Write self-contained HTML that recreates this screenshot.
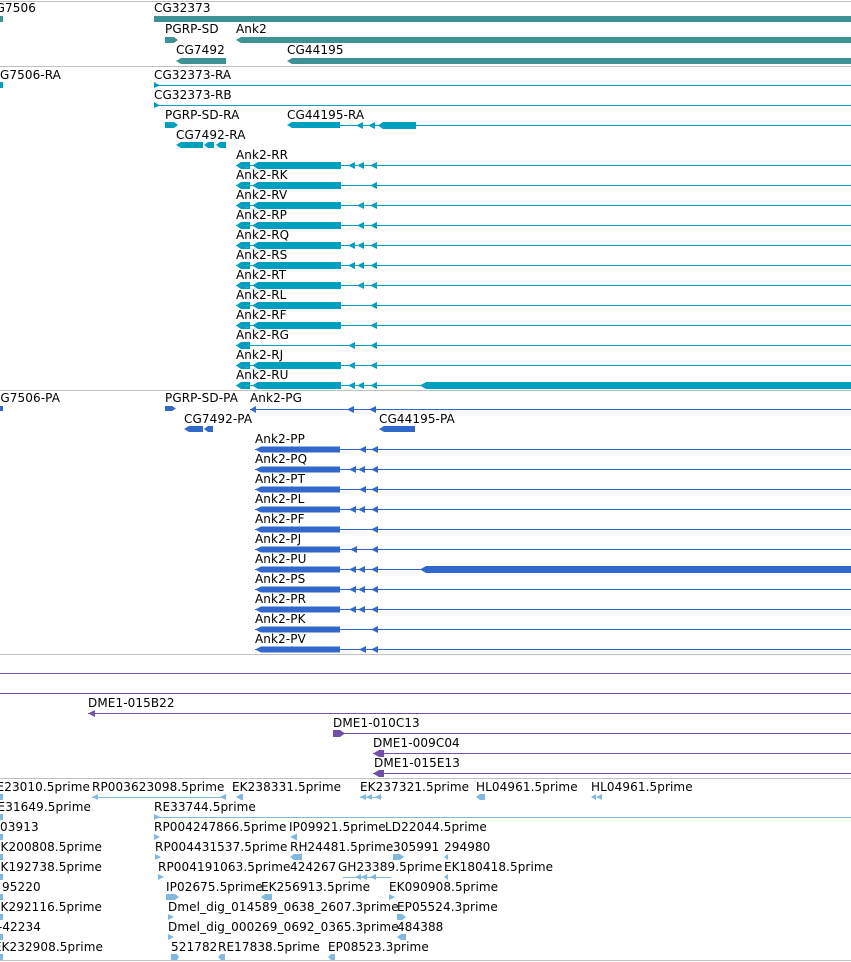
<!DOCTYPE html>
<html><head><meta charset="utf-8"><style>
html,body{margin:0;padding:0;background:#fff;width:851px;height:962px;overflow:hidden}
svg{display:block}
text{font-family:"DejaVu Sans","Liberation Sans",sans-serif;font-size:12px;fill:#000;letter-spacing:0.1px}
rect{shape-rendering:crispEdges}
</style></head><body>
<svg width="851" height="962" viewBox="0 0 851 962" xmlns="http://www.w3.org/2000/svg">
<!-- separators -->
<g fill="#c0c0c0">
<rect x="0" y="1" width="851" height="1"/>
<rect x="0" y="66" width="851" height="1"/>
<rect x="0" y="390" width="851" height="1"/>
<rect x="0" y="654" width="851" height="1"/>
<rect x="0" y="778" width="851" height="1"/>
<rect x="0" y="960" width="851" height="1"/>
</g>

<!-- GENE TRACK -->
<g fill="#3f9294">
<rect x="0" y="16" width="3" height="6"/>
<rect x="154" y="16" width="697" height="6"/>
<polygon points="165,37 174,37 178,40 174,43 165,43"/>
<polygon points="236,40 241,37 851,37 851,43 241,43"/>
<polygon points="176,61 181,58 226,58 226,64 181,64"/>
<polygon points="287,61 292,58 851,58 851,64 292,64"/>
</g>
<text x="36" y="12" text-anchor="end">CG7506</text>
<text x="154" y="12">CG32373</text>
<text x="165" y="33">PGRP-SD</text>
<text x="236" y="33">Ank2</text>
<text x="176" y="54">CG7492</text>
<text x="287" y="54">CG44195</text>

<!-- TRANSCRIPTS -->
<g fill="#009fc0" stroke="none">
<rect x="0" y="82" width="3" height="6"/>
<rect x="154" y="85" width="697" height="1"/>
<polygon points="154,82 160,85.5 154,88"/>
<rect x="154" y="105" width="697" height="1"/>
<polygon points="154,102 160,105.5 154,108"/>
<polygon points="165,122 174,122 178,125 174,128 165,128"/>
<polygon points="287,125 292,122 340,122 340,128 292,128"/>
<rect x="340" y="125" width="511" height="1"/>
<polygon points="356,125.5 363,122 363,129"/>
<polygon points="368,125.5 375,122 375,129"/>
<polygon points="378,125.5 383,122 416,122 416,129 383,129"/>
<polygon points="176,145 181,142 203,142 203,148 181,148"/>
<polygon points="204,145 208,142 214,142 214,148 208,148"/>
<polygon points="216,145 220,142 226,142 226,148 220,148"/>
</g>
<text x="61" y="79" text-anchor="end">CG7506-RA</text>
<text x="154" y="79">CG32373-RA</text>
<text x="154" y="99">CG32373-RB</text>
<text x="165" y="119">PGRP-SD-RA</text>
<text x="287" y="119">CG44195-RA</text>
<text x="176" y="139">CG7492-RA</text>

<defs>
<g id="sb"><polygon points="236,0.5 241,-3 250,-3 250,4 241,4" fill="#009fc0"/><rect x="236" y="0" width="615" height="1" fill="#009fc0"/></g>
<g id="bb"><polygon points="252,0.5 258,-3 341,-3 341,4 258,4" fill="#009fc0"/></g>
<polygon id="ar" points="0,0.5 7,-3 7,4" fill="#009fc0"/>
<g id="pb"><polygon points="255,0.5 261,-2.5 340,-2.5 340,3.5 261,3.5" fill="#3168cc"/><rect x="255" y="0" width="596" height="1" fill="#3168cc"/></g>
<polygon id="pa" points="0,0.5 7,-3 7,4" fill="#3168cc"/>
</defs>

<!-- Ank2 R rows -->
<g transform="translate(0,165)"><use href="#sb"/><use href="#bb"/><use href="#ar" x="348"/><use href="#ar" x="357"/><use href="#ar" x="370"/></g>
<g transform="translate(0,185)"><use href="#sb"/><use href="#bb"/><use href="#ar" x="370"/></g>
<g transform="translate(0,205)"><use href="#sb"/><use href="#bb"/><use href="#ar" x="357"/><use href="#ar" x="370"/></g>
<g transform="translate(0,225)"><use href="#sb"/><use href="#bb"/><use href="#ar" x="357"/><use href="#ar" x="370"/></g>
<g transform="translate(0,245)"><use href="#sb"/><use href="#bb"/><use href="#ar" x="348"/><use href="#ar" x="357"/><use href="#ar" x="370"/></g>
<g transform="translate(0,265)"><use href="#sb"/><use href="#bb"/><use href="#ar" x="348"/><use href="#ar" x="357"/><use href="#ar" x="370"/></g>
<g transform="translate(0,285)"><use href="#sb"/><use href="#bb"/><use href="#ar" x="357"/><use href="#ar" x="370"/></g>
<g transform="translate(0,305)"><use href="#sb"/><use href="#bb"/><use href="#ar" x="370"/></g>
<g transform="translate(0,325)"><use href="#sb"/><use href="#bb"/><use href="#ar" x="370"/></g>
<g transform="translate(0,345)"><use href="#sb"/><use href="#ar" x="348"/><use href="#ar" x="370"/></g>
<g transform="translate(0,365)"><use href="#sb"/><use href="#bb"/><use href="#ar" x="348"/><use href="#ar" x="370"/></g>
<g transform="translate(0,385)"><use href="#sb"/><use href="#bb"/><use href="#ar" x="348"/><use href="#ar" x="357"/><use href="#ar" x="370"/><polygon points="420,0.5 426,-3 851,-3 851,4 426,4" fill="#009fc0"/></g>
<text x="236" y="159">Ank2-RR</text>
<text x="236" y="179">Ank2-RK</text>
<text x="236" y="199">Ank2-RV</text>
<text x="236" y="219">Ank2-RP</text>
<text x="236" y="239">Ank2-RQ</text>
<text x="236" y="259">Ank2-RS</text>
<text x="236" y="279">Ank2-RT</text>
<text x="236" y="299">Ank2-RL</text>
<text x="236" y="319">Ank2-RF</text>
<text x="236" y="339">Ank2-RG</text>
<text x="236" y="359">Ank2-RJ</text>
<text x="236" y="379">Ank2-RU</text>

<!-- PROTEINS -->
<g fill="#3168cc">
<rect x="0" y="406" width="3" height="5"/>
<polygon points="165,406 172,406 176,408.5 172,411 165,411"/>
<rect x="250" y="409" width="601" height="1"/>
<polygon points="250,409.5 256,406 256,413"/>
<polygon points="184,429 189,426 203,426 203,432 189,432"/>
<polygon points="204,429 208,426 213,426 213,432 208,432"/>
<polygon points="379,429 384,426 415,426 415,432 384,432"/>
</g>
<use href="#pa" x="347" y="409"/><use href="#pa" x="369" y="409"/>
<text x="60" y="402" text-anchor="end">CG7506-PA</text>
<text x="165" y="402">PGRP-SD-PA</text>
<text x="250" y="402">Ank2-PG</text>
<text x="184" y="423">CG7492-PA</text>
<text x="379" y="423">CG44195-PA</text>

<g transform="translate(0,449)"><use href="#pb"/><use href="#pa" x="359"/><use href="#pa" x="371"/></g>
<g transform="translate(0,469)"><use href="#pb"/><use href="#pa" x="349"/><use href="#pa" x="358"/><use href="#pa" x="371"/></g>
<g transform="translate(0,489)"><use href="#pb"/><use href="#pa" x="359"/><use href="#pa" x="371"/></g>
<g transform="translate(0,509)"><use href="#pb"/><use href="#pa" x="349"/><use href="#pa" x="358"/><use href="#pa" x="371"/></g>
<g transform="translate(0,529)"><use href="#pb"/><use href="#pa" x="371"/></g>
<g transform="translate(0,549)"><use href="#pb"/><use href="#pa" x="350"/><use href="#pa" x="371"/></g>
<g transform="translate(0,569)"><use href="#pb"/><use href="#pa" x="349"/><use href="#pa" x="358"/><use href="#pa" x="371"/><polygon points="420,0.5 426,-3 851,-3 851,4 426,4" fill="#3168cc"/></g>
<g transform="translate(0,589)"><use href="#pb"/><use href="#pa" x="349"/><use href="#pa" x="358"/><use href="#pa" x="371"/></g>
<g transform="translate(0,609)"><use href="#pb"/><use href="#pa" x="349"/><use href="#pa" x="358"/><use href="#pa" x="371"/></g>
<g transform="translate(0,629)"><use href="#pb"/><use href="#pa" x="371"/></g>
<g transform="translate(0,649)"><use href="#pb"/><use href="#pa" x="359"/><use href="#pa" x="371"/></g>
<text x="255" y="443">Ank2-PP</text>
<text x="255" y="463">Ank2-PQ</text>
<text x="255" y="483">Ank2-PT</text>
<text x="255" y="503">Ank2-PL</text>
<text x="255" y="523">Ank2-PF</text>
<text x="255" y="543">Ank2-PJ</text>
<text x="255" y="563">Ank2-PU</text>
<text x="255" y="583">Ank2-PS</text>
<text x="255" y="603">Ank2-PR</text>
<text x="255" y="623">Ank2-PK</text>
<text x="255" y="643">Ank2-PV</text>

<!-- PURPLE -->
<g fill="#7050a8">
<rect x="0" y="673" width="851" height="1"/>
<rect x="0" y="693" width="851" height="1"/>
<rect x="88" y="713" width="763" height="1"/>
<polygon points="88,713.5 95,710 95,717"/>
<rect x="333" y="733" width="518" height="1"/>
<polygon points="333,730 340,730 345,733.5 340,737 333,737"/>
<rect x="373" y="753" width="478" height="1"/>
<polygon points="373,753.5 379,750 384,750 384,757 379,757"/>
<rect x="373" y="773" width="478" height="1"/>
<polygon points="373,773.5 379,770 384,770 384,777 379,777"/>
</g>
<text x="88" y="707">DME1-015B22</text>
<text x="333" y="727">DME1-010C13</text>
<text x="373" y="747">DME1-009C04</text>
<text x="374" y="767">DME1-015E13</text>

<!-- ESTs -->
<g fill="#80b8e0">
<rect x="0" y="794" width="3" height="6"/>
<rect x="92" y="797" width="134" height="1"/>
<polygon points="92,797 98,794 98,800"/>
<polygon points="220,797 226,794 226,800"/>
<polygon points="236,797 241,794 243,794 243,800 241,800"/>
<polygon points="360,797 366,794 366,800"/><polygon points="366,797 372,794 372,800"/><polygon points="375,797 381,794 381,800"/>
<rect x="360" y="797" width="22" height="1"/>
<polygon points="476,797 480,794 485,794 485,800 480,800"/>
<polygon points="591,797 596,794 596,800"/><polygon points="596,797 602,794 602,800"/>
<rect x="0" y="814" width="3" height="6"/>
<rect x="154" y="817" width="697" height="1"/>
<polygon points="154,814 160,817 154,820"/>
<rect x="0" y="834" width="3" height="6"/>
<polygon points="154,834 160,837 154,840"/>
<polygon points="290,837 297,833.5 297,840.5"/>
<rect x="0" y="854" width="3" height="6"/>
<polygon points="155,854 161,857 155,860"/>
<polygon points="290,857 294,854 302,854 302,860 294,860"/>
<polygon points="393,854 400,854 404,857 400,860 393,860"/>
<polygon points="444,857 448,854 448,860"/>
<rect x="0" y="874" width="3" height="6"/>
<polygon points="158,874 164,877 158,880"/>
<rect x="343" y="877" width="48" height="1"/>
<polygon points="355,877 361,874 361,880"/><polygon points="361,877 367,874 367,880"/><polygon points="370,877 376,874 376,880"/>
<polygon points="444,877 448,874 448,880"/>
<rect x="0" y="894" width="3" height="6"/>
<polygon points="166,894 175,894 179,897 175,900 166,900"/>
<polygon points="261,897 265,894 272,894 272,900 265,900"/>
<polygon points="389,894 395,897 389,900"/>
<rect x="0" y="914" width="3" height="6"/>
<polygon points="168,914 174,917 168,920"/>
<polygon points="397,914 402,914 406,917 402,920 397,920"/>
<rect x="0" y="934" width="3" height="6"/>
<polygon points="168,934 174,937 168,940"/>
<polygon points="397,937 401,934 406,934 406,940 401,940"/>
<rect x="0" y="954" width="3" height="6"/>
<polygon points="171,954 177,954 179,957 177,960 171,960"/>
<polygon points="218,957 221,954 225,954 225,960 221,960"/>
<polygon points="328,957 331,954 335,954 335,960 331,960"/>
</g>
<text x="90" y="791" text-anchor="end">RE23010.5prime</text>
<text x="92" y="791">RP003623098.5prime</text>
<text x="232" y="791">EK238331.5prime</text>
<text x="360" y="791">EK237321.5prime</text>
<text x="476" y="791">HL04961.5prime</text>
<text x="591" y="791">HL04961.5prime</text>
<text x="91" y="811" text-anchor="end">RE31649.5prime</text>
<text x="154" y="811">RE33744.5prime</text>
<text x="0" y="831">03913</text>
<text x="154" y="831">RP004247866.5prime</text>
<text x="289" y="831">IP09921.5prime</text>
<text x="385" y="831">LD22044.5prime</text>
<text x="102" y="851" text-anchor="end">EK200808.5prime</text>
<text x="155" y="851">RP004431537.5prime</text>
<text x="290" y="851">RH24481.5prime</text>
<text x="393" y="851">305991</text>
<text x="444" y="851">294980</text>
<text x="102" y="871" text-anchor="end">EK192738.5prime</text>
<text x="158" y="871">RP004191063.5prime</text>
<text x="290" y="871">424267</text>
<text x="338" y="871">GH23389.5prime</text>
<text x="444" y="871">EK180418.5prime</text>
<text x="2" y="891">95220</text>
<text x="166" y="891">IP02675.5prime</text>
<text x="261" y="891">EK256913.5prime</text>
<text x="389" y="891">EK090908.5prime</text>
<text x="102" y="911" text-anchor="end">EK292116.5prime</text>
<text x="168" y="911">Dmel_dig_014589_0638_2607.3prime</text>
<text x="397" y="911">EP05524.3prime</text>
<text x="41" y="931" text-anchor="end">-42234</text>
<text x="168" y="931">Dmel_dig_000269_0692_0365.3prime</text>
<text x="397" y="931">484388</text>
<text x="103" y="951" text-anchor="end">EK232908.5prime</text>
<text x="171" y="951">521782</text>
<text x="218" y="951">RE17838.5prime</text>
<text x="328" y="951">EP08523.3prime</text>
</svg>
</body></html>
